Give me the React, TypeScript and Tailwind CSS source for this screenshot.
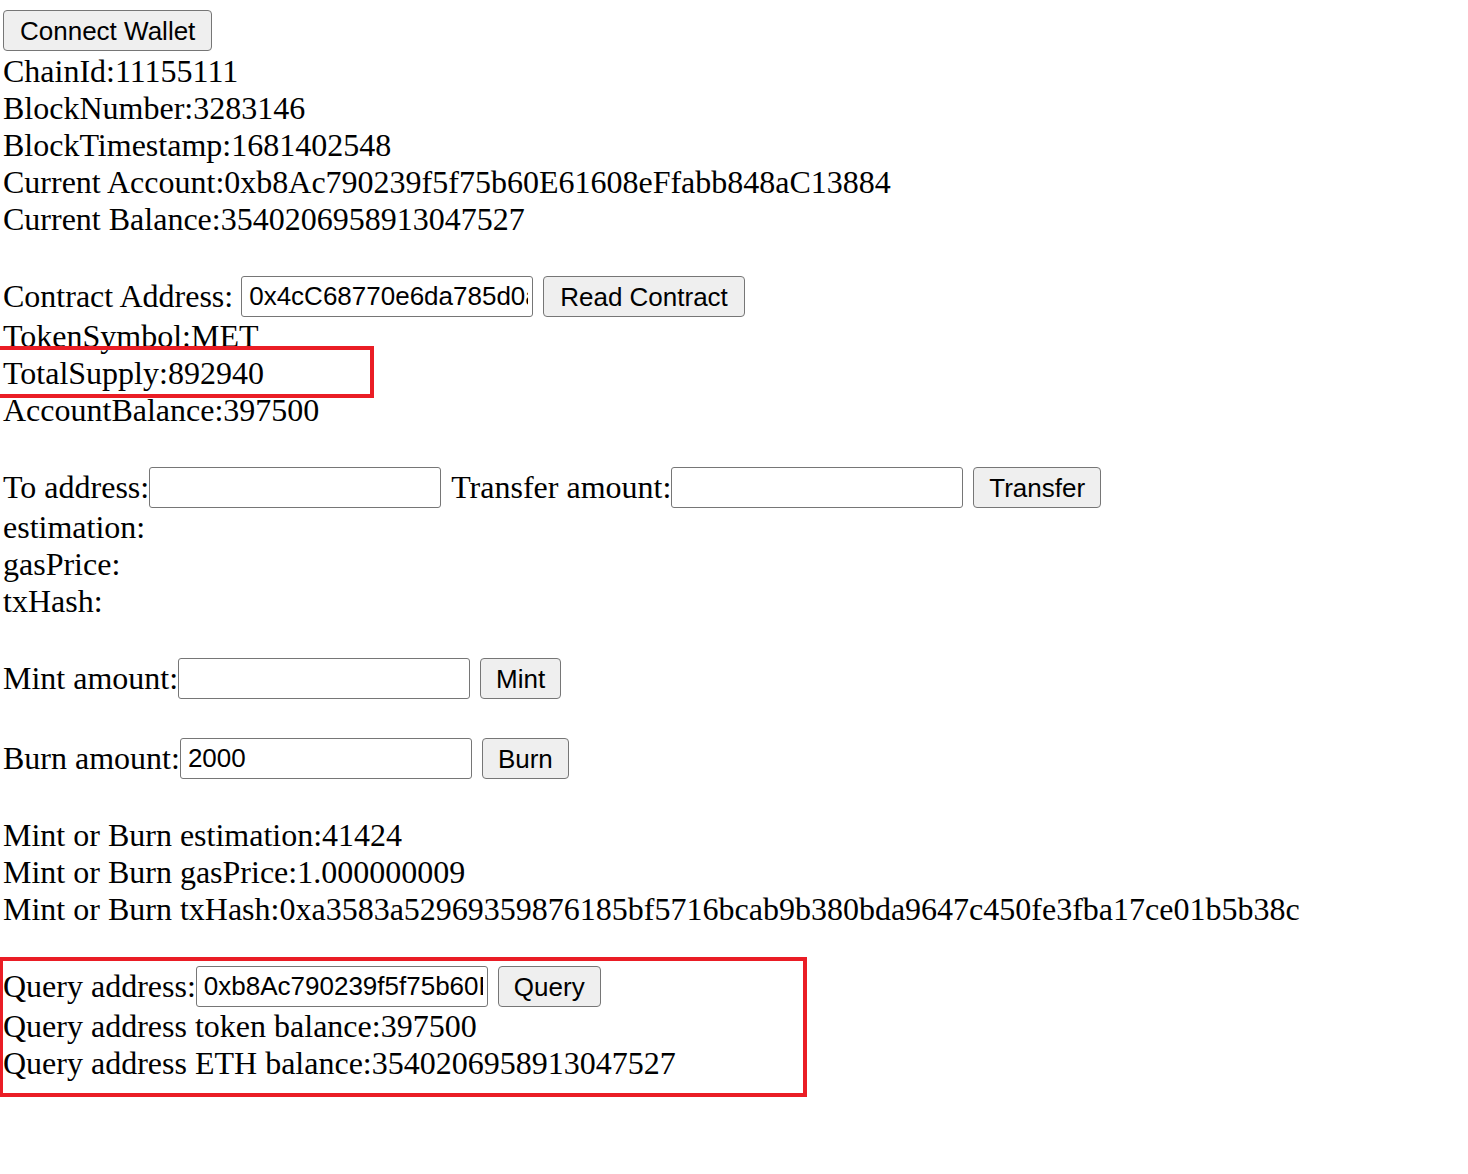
import React from "react";

const serif = { fontFamily: '"Liberation Serif", "Times New Roman", serif' };

function Btn({ children, className = "" }: { children: React.ReactNode; className?: string }) {
  return (
    <button
      className={
        "h-[41px] shrink-0 rounded-[4px] border border-[#767676] bg-[#efefef] px-[15px] text-[26px] leading-[30px] text-black " +
        className
      }
      style={{ fontFamily: '"Liberation Sans", Arial, sans-serif' }}
    >
      {children}
    </button>
  );
}

function Field({ value = "", className = "" }: { value?: string; className?: string }) {
  return (
    <input
      readOnly
      value={value}
      className={
        "h-[41px] w-[292px] shrink-0 rounded-[3px] border border-[#767676] bg-white pl-[7px] pr-[4px] text-[26px] text-black outline-none " +
        className
      }
      style={{ fontFamily: '"Liberation Sans", Arial, sans-serif' }}
    />
  );
}

function Line({ children }: { children?: React.ReactNode }) {
  return <div className="h-[37px] whitespace-nowrap">{children}</div>;
}

function Row({ children }: { children: React.ReactNode }) {
  return <div className="flex h-[43px] items-center whitespace-nowrap">{children}</div>;
}

export default function App() {
  return (
    <div className="relative min-h-[1174px] w-full overflow-hidden bg-white">
      <div className="pl-[3px] pt-[10px] text-[32px] leading-[37px] text-black" style={serif}>
        <div className="flex h-[43px] items-start">
          <Btn className="px-[16px]">Connect Wallet</Btn>
        </div>
        <Line>ChainId:11155111</Line>
        <Line>BlockNumber:3283146</Line>
        <Line>BlockTimestamp:1681402548</Line>
        <Line>Current Account:0xb8Ac790239f5f75b60E61608eFfabb848aC13884</Line>
        <Line>Current Balance:3540206958913047527</Line>
        <Line />
        <Row>
          <span>Contract Address:</span>
          <Field value="0x4cC68770e6da785d0a1b2c3d4e5f" className="ml-[8px]" />
          <Btn className="ml-[10px] px-[16px]">Read Contract</Btn>
        </Row>
        <Line>TokenSymbol:MET</Line>
        <Line>TotalSupply:892940</Line>
        <Line>AccountBalance:397500</Line>
        <Line />
        <Row>
          <span>To address:</span>
          <Field />
          <span className="ml-[10px]">Transfer amount:</span>
          <Field />
          <Btn className="ml-[10px]">Transfer</Btn>
        </Row>
        <Line>estimation:</Line>
        <Line>gasPrice:</Line>
        <Line>txHash:</Line>
        <Line />
        <Row>
          <span>Mint amount:</span>
          <Field />
          <Btn className="ml-[10px]">Mint</Btn>
        </Row>
        <Line />
        <Row>
          <span>Burn amount:</span>
          <Field value="2000" />
          <Btn className="ml-[10px]">Burn</Btn>
        </Row>
        <Line />
        <Line>Mint or Burn estimation:41424</Line>
        <Line>Mint or Burn gasPrice:1.000000009</Line>
        <Line>Mint or Burn txHash:0xa3583a52969359876185bf5716bcab9b380bda9647c450fe3fba17ce01b5b38c</Line>
        <Line />
        <Row>
          <span>Query address:</span>
          <Field value="0xb8Ac790239f5f75b60E61608eFfabb848aC13884" />
          <Btn className="ml-[10px]">Query</Btn>
        </Row>
        <Line>Query address token balance:397500</Line>
        <Line>Query address ETH balance:3540206958913047527</Line>
      </div>

      {/* annotation boxes */}
      <div className="pointer-events-none absolute left-[-6px] top-[346px] h-[52px] w-[380px] border-[4px] border-[#ea1d25]" />
      <div className="pointer-events-none absolute left-0 top-[957px] h-[140px] w-[807px] border-y-[4px] border-l-[3px] border-r-[4px] border-[#ea1d25]" />
    </div>
  );
}
